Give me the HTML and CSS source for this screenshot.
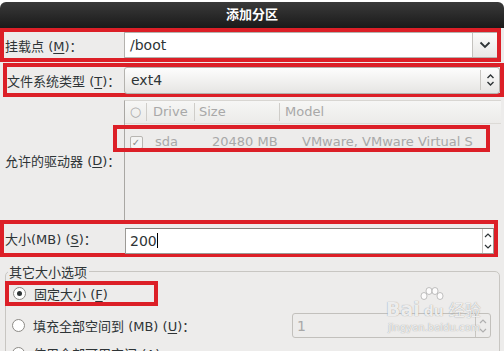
FILE: index.html
```html
<!DOCTYPE html>
<html lang="zh-CN">
<head>
  <meta charset="UTF-8" />
  <title>添加分区</title>
  <link rel="stylesheet" href="styles.css">
</head>
<body>
  <div id="window">
    <div class="titlebar">添加分区</div>
    <div class="content">

      <div class="row mark r-mount">
        <div class="label">挂载点 (<u>M</u>)：</div>
        <div class="combo-entry">
          <span class="entry-text">/boot</span>
          <span class="combo-btn">
            <svg width="12" height="8" viewBox="0 0 12 8"><polyline points="1.5,1.5 6,6 10.5,1.5" fill="none" stroke="#2e3436" stroke-width="1.8"/></svg>
          </span>
        </div>
      </div>

      <div class="row mark r-fs">
        <div class="label">文件系统类型 (<u>T</u>)：</div>
        <div class="combo">
          <span class="entry-text">ext4</span>
          <span class="combo-arrows">
            <svg width="9" height="14" viewBox="0 0 9 14"><polyline points="1.5,5 4.5,2 7.5,5" fill="none" stroke="#2e3436" stroke-width="1.4"/><polyline points="1.5,9 4.5,12 7.5,9" fill="none" stroke="#2e3436" stroke-width="1.4"/></svg>
          </span>
        </div>
      </div>

      <div class="row r-drives">
        <div class="label">允许的驱动器 (<u>D</u>)：</div>
        <div class="tree">
          <div class="tree-head">
            <span class="col c-check">○</span>
            <span class="col c-drive">Drive</span>
            <span class="col c-size">Size</span>
            <span class="col c-model">Model</span>
          </div>
          <div class="tree-row">
            <span class="cell c-check"><span class="checkbox">✓</span></span>
            <span class="cell c-drive">sda</span>
            <span class="cell c-size">20480 MB</span>
            <span class="cell c-model">VMware, VMware Virtual S</span>
          </div>
          <div class="row-mark"></div>
        </div>
      </div>

      <div class="row mark r-size">
        <div class="label">大小(MB) (<u>S</u>)：</div>
        <div class="spin">
          <span class="entry-text">200<span class="caret"></span></span>
          <span class="spin-btns">
            <svg width="8" height="20" viewBox="0 0 8 20"><polyline points="1,6 4,3 7,6" fill="none" stroke="#2e3436" stroke-width="1.2"/><polyline points="1,14 4,17 7,14" fill="none" stroke="#2e3436" stroke-width="1.2"/></svg>
          </span>
        </div>
      </div>

      <fieldset class="frame">
        <legend>其它大小选项</legend>
        <div class="option mark opt-fixed">
          <span class="radio checked"></span>
          <span>固定大小 (<u>F</u>)</span>
        </div>
        <div class="option opt-fill">
          <span class="radio"></span>
          <span class="opt-text">填充全部空间到 (MB) (<u>U</u>)：</span>
          <div class="spin small">
            <span class="entry-text">1</span>
            <span class="spin-btns">
              <svg width="8" height="20" viewBox="0 0 8 20"><polyline points="1,7 4,4 7,7" fill="none" stroke="#b0b0b0" stroke-width="1.2"/><polyline points="1,13 4,16 7,13" fill="none" stroke="#b0b0b0" stroke-width="1.2"/></svg>
            </span>
          </div>
        </div>
        <div class="option opt-all">
          <span class="radio"></span>
          <span>使用全部可用空间 (<u>A</u>)</span>
        </div>
      </fieldset>

      <div class="watermark">
        <svg class="paw" width="24" height="18" viewBox="0 0 24 18">
          <g fill="rgba(255,255,255,0.85)" stroke="rgba(130,130,130,0.6)" stroke-width="0.8">
            <ellipse cx="4" cy="9" rx="3" ry="3.5"/>
            <ellipse cx="9" cy="4" rx="3" ry="3.5"/>
            <ellipse cx="15" cy="4" rx="3" ry="3.5"/>
            <ellipse cx="20" cy="9" rx="3" ry="3.5"/>
          </g>
        </svg>
        <div class="wm-logo">Bai<span class="wm-du">du</span><span class="wm-cn">经验</span></div>
        <div class="wm-url">jingyan.baidu.com</div>
      </div>
    </div>
  </div>
</body>
</html>
```

FILE: styles.css
```css
body {
  margin: 0;
  background: #fff;
  font-family: "DejaVu Sans", "Noto Sans CJK SC", sans-serif;
  font-size: 13px;
  color: #2e3436;
  overflow: hidden;
}

#window {
  width: 504px;
  height: 351px;
  padding-top: 2px;
  box-sizing: border-box;
}

.titlebar {
  height: 26px;
  line-height: 26px;
  text-align: center;
  color: #fff;
  font-weight: bold;
  background: linear-gradient(#3a3a3a, #1a1a1a);
  border-radius: 6px 6px 0 0;
}

.content {
  position: relative;
  background: #edeceb;
  height: 323px;
  overflow: hidden;
}

.row {
  display: flex;
  align-items: center;
}

.label {
  flex: none;
  white-space: nowrap;
}

.mark {
  border: 4px solid #dc1f27;
}

u {
  text-decoration: underline;
  text-underline-offset: 2px;
}

/* mount point */
.r-mount {
  width: 493px;
  height: 26px;
}

.r-mount .label {
  width: 119px;
  padding-left: 1px;
}

.combo-entry {
  flex: 1;
  height: 26px;
  box-sizing: border-box;
  display: flex;
  align-items: center;
  background: #fff;
  border: 1px solid #b4b2ae;
  border-right: none;
}

.entry-text {
  flex: 1;
  padding-left: 5px;
  font-size: 14px;
}

.combo-btn {
  width: 24px;
  height: 100%;
  display: flex;
  align-items: center;
  justify-content: center;
  border-left: 1px solid #c4c2be;
  background: linear-gradient(#fbfbfa, #e9e8e6);
}

/* file system */
.r-fs {
  margin: 1px 0 0 3px;
  width: 493px;
  height: 26px;
}

.r-fs .label {
  width: 117px;
}

.combo {
  flex: 1;
  height: 27px;
  box-sizing: border-box;
  display: flex;
  align-items: center;
  border: 1px solid #b4b2ae;
  border-radius: 3px;
  background: linear-gradient(#fdfdfd, #e6e5e3);
}

.combo .entry-text {
  padding-left: 6px;
}

.combo-arrows {
  width: 18px;
  height: 20px;
  display: flex;
  align-items: center;
  justify-content: center;
  border-left: 1px solid #c8c6c2;
}

/* drives */
.r-drives {
  height: 123px;
  align-items: stretch;
}

.r-drives .label {
  width: 119px;
  padding-left: 5px;
  display: flex;
  align-items: center;
  padding-top: 4px;
}

.tree {
  position: relative;
  margin-top: 3px;
  width: 376px;
  border-left: 1px solid #a9a7a3;
  border-top: 1px solid #d8d6d2;
  background: #edeceb;
  color: #a8a8a8;
}

.tree-head {
  display: flex;
  height: 22px;
  align-items: center;
  background: linear-gradient(#f6f6f5, #ecebe9);
  border-bottom: 1px solid #dcdad6;
}

.col {
  height: 18px;
  line-height: 18px;
  border-right: 1px solid #cfcdc9;
  box-sizing: border-box;
}

.c-check {
  width: 22px;
  text-align: center;
  flex: none;
}

.c-drive {
  width: 48px;
  padding-left: 6px;
  flex: none;
  box-sizing: border-box;
}

.c-size {
  width: 85px;
  padding-left: 4px;
  flex: none;
  box-sizing: border-box;
}

.c-model {
  border-right: none;
  padding-left: 5px;
  flex: 1;
  white-space: nowrap;
}

.tree-row {
  display: flex;
  align-items: center;
  height: 20px;
  margin-top: 7px;
  white-space: nowrap;
  overflow: hidden;
}

.cell {
  flex: none;
  box-sizing: border-box;
}

.tree-row .c-drive {
  padding-left: 8px;
}

.tree-row .c-size {
  width: 107px;
  padding-left: 17px;
}

.tree-row .c-model {
  padding-left: 0;
}

.checkbox {
  display: inline-block;
  width: 11px;
  height: 11px;
  line-height: 11px;
  font-size: 10px;
  text-align: center;
  border: 1px solid #b8b6b2;
  background: #f4f4f3;
  color: #8a8a8a;
  border-radius: 2px;
}

.row-mark {
  position: absolute;
  left: -12px;
  top: 24px;
  width: 369px;
  height: 19px;
  border: 4px solid #dc1f27;
}

/* size */
.r-size {
  width: 490px;
  height: 29px;
}

.r-size .label {
  width: 120px;
  padding-left: 1px;
}

.spin {
  flex: 1;
  height: 26px;
  margin-top: 4px;
  box-sizing: border-box;
  display: flex;
  align-items: center;
  background: #fff;
  border: 1px solid #9c9a96;
  border-top-color: #85837f;
}

.spin .entry-text {
  padding-left: 4px;
}

.caret {
  display: inline-block;
  width: 1px;
  height: 15px;
  background: #000;
  vertical-align: -2px;
}

.spin-btns {
  width: 10px;
  height: 100%;
  display: flex;
  align-items: center;
  justify-content: center;
  border-left: 1px solid #c8c6c2;
}

/* other size options */
.frame {
  margin: 5px 4px 0 5px;
  padding: 0;
  border: 1px solid #c8c6c2;
  border-radius: 5px;
  height: 120px;
}

.frame legend {
  padding: 0 2px 0 1px;
  margin-left: 2px;
}

.option {
  display: flex;
  align-items: center;
  height: 25px;
}

.opt-fixed {
  width: 141px;
  height: 17px;
  margin: 0 0 0 -1px;
  padding-left: 4px;
}

.opt-fill {
  margin-top: 7px;
  padding-left: 6px;
}

.opt-all {
  padding-left: 6px;
  margin-top: 3px;
}

.radio {
  width: 11px;
  height: 11px;
  border: 1px solid #8c8a86;
  border-radius: 50%;
  background: #fff;
  margin-right: 8px;
  position: relative;
  flex: none;
}

.radio.checked::after {
  content: "";
  position: absolute;
  left: 3px;
  top: 3px;
  width: 5px;
  height: 5px;
  border-radius: 50%;
  background: #2e3436;
}

.opt-text {
  width: 259px;
}

.spin.small {
  flex: none;
  width: 199px;
  height: 25px;
  margin-top: 0;
  border: 1px solid #c2c0bc;
  border-radius: 3px;
  background: #edeceb;
  color: #a8a8a8;
}

.spin.small .spin-btns {
  width: 14px;
}

/* watermark */
.watermark {
  position: absolute;
  left: 386px;
  top: 271px;
  width: 96px;
  color: rgba(255, 255, 255, 0.85);
  text-shadow: 0 0 1px rgba(110, 110, 110, 0.8);
  pointer-events: none;
}

.paw {
  position: absolute;
  left: 34px;
  top: -12px;
}

.wm-logo {
  font-family: "DejaVu Sans", sans-serif;
  font-weight: bold;
  font-size: 19px;
  line-height: 20px;
  white-space: nowrap;
}

.wm-du {
  font-size: 14px;
  margin-left: 4px;
}

.wm-cn {
  font-family: "Noto Sans CJK SC", sans-serif;
  font-size: 16px;
  font-weight: normal;
  margin-left: 5px;
}

.wm-url {
  font-size: 10px;
  line-height: 12px;
  margin-top: 1px;
  margin-left: 2px;
  white-space: nowrap;
}
```
